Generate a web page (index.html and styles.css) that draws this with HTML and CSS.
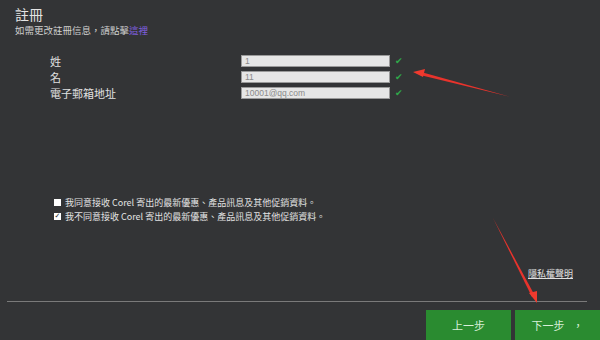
FILE: index.html
```html
<!DOCTYPE html>
<html lang="zh-Hant">
<head>
<meta charset="utf-8">
<link rel="stylesheet" href="styles.css">
</head>
<body>
<div class="page">
  <div class="header">
    <div class="title">註冊</div>
    <div class="subtitle">如需更改註冊信息，請點擊<a class="link">這裡</a></div>
  </div>
  <div class="form">
    <div class="label">姓</div>
    <div class="field"><span class="input">1</span><span class="check">✔</span></div>
    <div class="label">名</div>
    <div class="field"><span class="input">11</span><span class="check">✔</span></div>
    <div class="label">電子郵箱地址</div>
    <div class="field"><span class="input">10001@qq.com</span><span class="check">✔</span></div>
  </div>
  <div class="opts">
    <div class="opt"><span class="box"></span>我同意接收 Corel 寄出的最新優惠、產品訊息及其他促銷資料。</div>
    <div class="opt"><span class="box checked">✓</span>我不同意接收 Corel 寄出的最新優惠、產品訊息及其他促銷資料。</div>
  </div>
  <div class="privacy-row"><a class="privacy">隱私權聲明</a></div>
  <div class="rule"></div>
  <div class="buttons">
    <div class="btn">上一步</div>
    <div class="btn">下一步<span class="comma">，</span></div>
  </div>
  <svg class="arrows" width="600" height="340" viewBox="0 0 600 340">
    <polygon points="511,97 421,72 420,75" fill="#e8332c"/>
    <polygon points="413,72 425,69 423,77" fill="#f03a2e"/>
    <polygon points="493,218 535,296 532,297" fill="#e8332c"/>
    <polygon points="537,303 529,293 537,291" fill="#f03a2e"/>
  </svg>
</div>
</body>
</html>
```
FILE: styles.css
```css
* { box-sizing: border-box; }
body {
  margin: 0;
  background: #333436;
  font-family: "Noto Sans CJK TC", "Noto Sans", "Liberation Sans", sans-serif;
  color: #dcdcdc;
}
.page {
  position: relative;
  width: 600px;
  height: 340px;
  overflow: hidden;
  display: flex;
  flex-direction: column;
}
.header {
  padding: 5px 0 0 15px;
}
.title {
  font-size: 14px;
  line-height: 19px;
  color: #e4e4e4;
}
.subtitle {
  font-size: 9.5px;
  line-height: 13px;
  color: #cfcfcf;
}
.link { color: #8060e0; }
.form {
  margin-top: 16px;
  display: grid;
  grid-template-columns: 191px auto;
  padding-left: 50px;
  align-items: center;
}
.label {
  font-size: 11px;
  line-height: 16px;
  color: #e0e0e0;
}
.field {
  display: flex;
  align-items: center;
  gap: 5px;
}
.input {
  width: 149px;
  height: 12px;
  background: #e6e6e6;
  border: 1px solid #9a9a9a;
  font-family: "Liberation Sans", Arial, sans-serif;
  font-size: 8.5px;
  line-height: 10px;
  color: #8a8a8a;
  padding-left: 3px;
}
.check {
  color: #2fa84a;
  font-size: 9px;
  line-height: 10px;
}
.opts {
  margin-top: 96px;
  padding-left: 54px;
  display: flex;
  flex-direction: column;
  gap: 3px;
}
.opt {
  display: flex;
  align-items: center;
  font-size: 9px;
  line-height: 11px;
  color: #e2e2e2;
}
.box {
  width: 7px;
  height: 7px;
  background: #ffffff;
  margin-right: 4px;
  color: #222;
  font-size: 7px;
  line-height: 7px;
  text-align: center;
  font-family: "DejaVu Sans", sans-serif;
  font-weight: bold;
}
.privacy-row {
  margin-top: 46px;
  display: flex;
  justify-content: flex-end;
  padding-right: 27px;
}
.privacy {
  font-size: 9px;
  line-height: 11px;
  color: #e0e0e0;
  text-decoration: underline;
}
.rule {
  margin: 22px 13px 0 7px;
  height: 2px;
  background: #7a7a7a;
}
.buttons {
  margin-top: 8px;
  display: flex;
  justify-content: flex-end;
  gap: 4px;
}
.btn {
  width: 85px;
  height: 30px;
  background: #2a8b30;
  color: #d8efd8;
  font-size: 11px;
  display: flex;
  align-items: center;
  justify-content: center;
}
.comma { margin-left: 8px; }
.arrows {
  position: absolute;
  left: 0;
  top: 0;
  pointer-events: none;
}
```
